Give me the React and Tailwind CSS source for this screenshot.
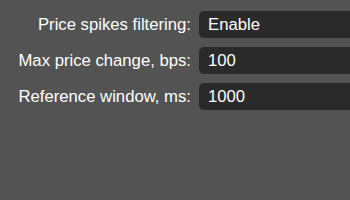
import React from "react";

const rows = [
  ["Price spikes filtering:", "Enable"],
  ["Max price change, bps:", "100"],
  ["Reference window, ms:", "1000"],
];

export default function App() {
  return (
    <div className="w-[350px] h-[200px] bg-[#535353] overflow-hidden pt-[11px] flex flex-col gap-[9px] font-['Liberation_Sans',Arial,sans-serif] text-[16.7px] text-white">
      {rows.map(([label, value]) => (
        <div key={label} className="flex items-center h-[27px]">
          <div className="w-[191px] shrink-0 text-right whitespace-nowrap">{label}</div>
          <div className="ml-[8px] w-[170px] shrink-0 h-[27px] rounded-[5px] bg-[#2a2a2a] flex items-center pl-[9px] whitespace-nowrap">
            {value}
          </div>
        </div>
      ))}
    </div>
  );
}
